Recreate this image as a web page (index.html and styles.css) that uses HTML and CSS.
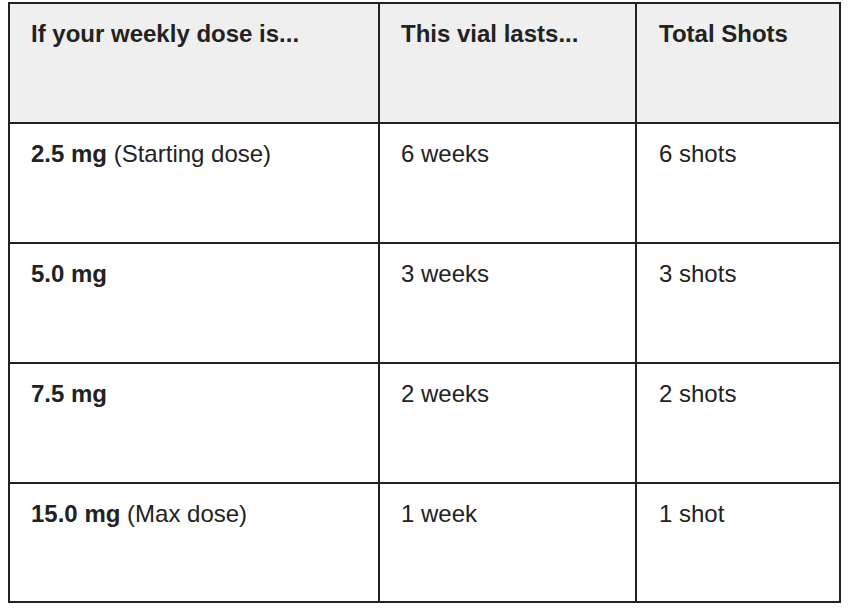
FILE: index.html
```html
<!DOCTYPE html>
<html>
<head>
<meta charset="utf-8">
<link rel="stylesheet" href="styles.css">
</head>
<body>
<table class="dose-table">
  <colgroup>
    <col class="c1">
    <col class="c2">
    <col class="c3">
  </colgroup>
  <thead>
    <tr>
      <th>If your weekly dose is...</th>
      <th>This vial lasts...</th>
      <th>Total Shots</th>
    </tr>
  </thead>
  <tbody>
    <tr>
      <td><strong>2.5 mg</strong> (Starting dose)</td>
      <td>6 weeks</td>
      <td>6 shots</td>
    </tr>
    <tr>
      <td><strong>5.0 mg</strong></td>
      <td>3 weeks</td>
      <td>3 shots</td>
    </tr>
    <tr>
      <td><strong>7.5 mg</strong></td>
      <td>2 weeks</td>
      <td>2 shots</td>
    </tr>
    <tr>
      <td><strong>15.0 mg</strong> (Max dose)</td>
      <td>1 week</td>
      <td>1 shot</td>
    </tr>
  </tbody>
</table>
</body>
</html>
```

FILE: styles.css
```css
html, body {
  margin: 0;
  background: #ffffff;
}
body {
  padding: 2px 0 0 8px;
  font-family: "Liberation Sans", Arial, sans-serif;
  color: #222222;
}
.dose-table {
  border-collapse: separate;
  border-spacing: 0;
  table-layout: fixed;
  width: 833px;
  border-top: 2px solid #222222;
  border-left: 2px solid #222222;
  font-size: 24px;
}
.c1 { width: 370px; }
.c2 { width: 257px; }
.c3 { width: 204px; }
.dose-table tr {
  height: 120px;
}
.dose-table tbody tr:last-child {
  height: 119px;
}
.dose-table th,
.dose-table td {
  border-right: 2px solid #222222;
  border-bottom: 2px solid #222222;
  padding: 16px 20px 16px 21px;
  text-align: left;
  vertical-align: top;
  line-height: normal;
}
.dose-table th:nth-child(3),
.dose-table td:nth-child(3) {
  padding-left: 22px;
}
.dose-table th {
  background: #efefef;
  font-weight: bold;
}
.dose-table td {
  font-weight: normal;
}
.dose-table strong {
  font-weight: bold;
}
```
